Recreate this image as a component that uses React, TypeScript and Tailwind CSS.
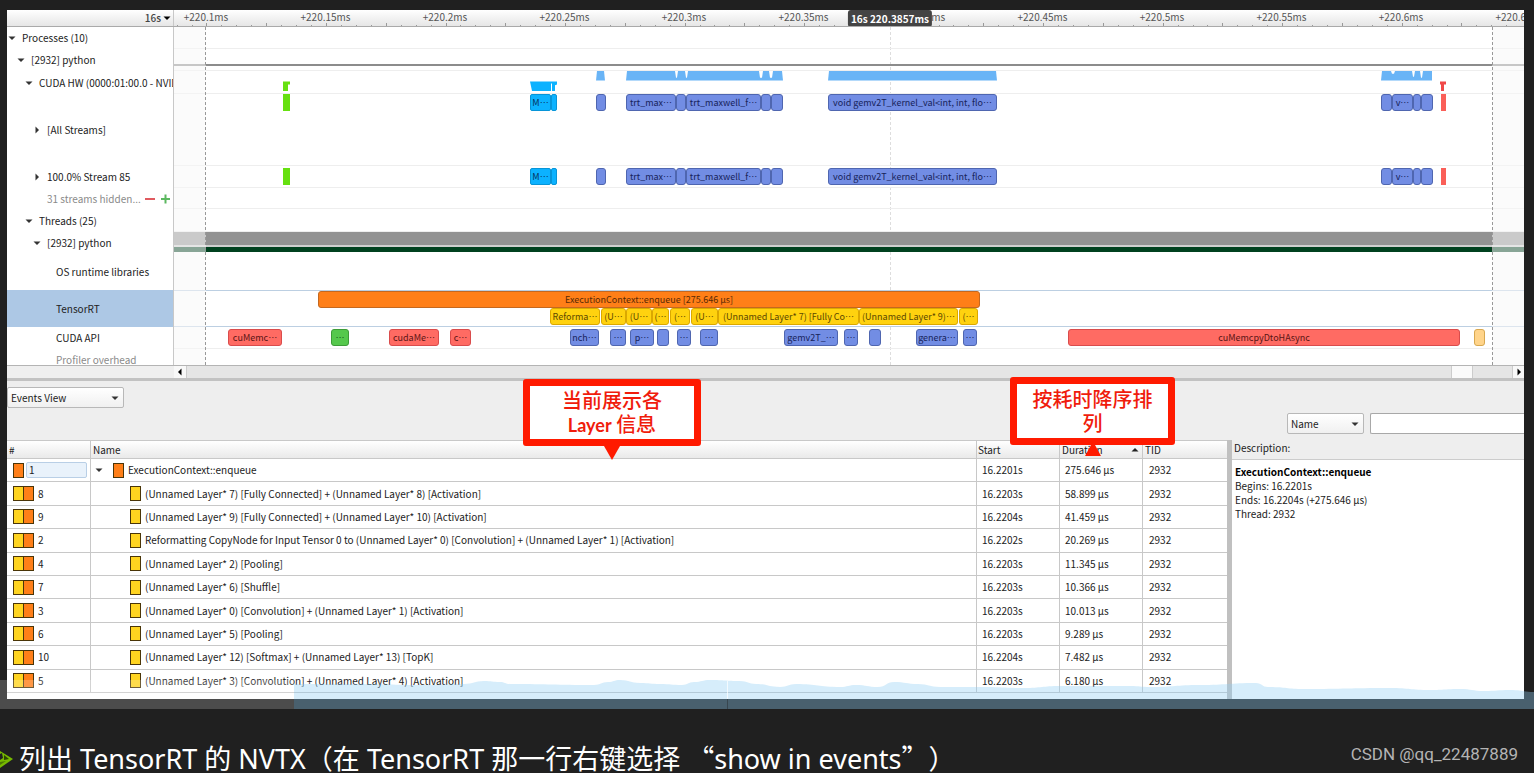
import { clsx } from 'clsx'

type Tone = 'green' | 'cyan' | 'blue' | 'red' | 'orange' | 'yellow' | 'lime' | 'sand'

interface Bar {
  x: number
  w: number
  tone: Tone
  text?: string
}

interface TreeRow {
  label?: string
  depth: number
  arrow?: 'down' | 'right'
  height: string
  kind?: 'process' | 'chart' | 'kernels' | 'stream' | 'hidden' | 'thread' | 'tensorrt' | 'api' | 'overhead'
}

// Width of the visible time range, in timeline units
const RANGE = 1350
const pct = (value: number) => `${(value / RANGE) * 100}%`

const tones: Record<Tone, string> = {
  green: 'bg-[#66e010]',
  cyan: 'bg-[#0cb2ff] border border-[#0795d8] rounded-xs text-[#06325c]',
  blue: 'bg-[#728de4] border border-[#4f66b0] rounded-[3px] text-[#17235a]',
  red: 'bg-[#ff6b63] border border-[#d94c4c] rounded-[3px] text-[#5a1414]',
  orange: 'bg-[#ff7f18] border border-[#c4681f] rounded-[3px] text-[#5a2a05]',
  yellow: 'bg-[#ffd20f] border border-[#dba800] rounded-[3px] text-[#5c4700]',
  lime: 'bg-[#55c84c] border border-[#3d9c38] rounded-[3px] text-[#14501a]',
  sand: 'bg-[#ffd48a] border border-[#d8a850] rounded-[3px]',
}

const kernels: Bar[] = [
  { x: 109, w: 7, tone: 'green' },
  { x: 356, w: 21, tone: 'cyan', text: 'M⋯' },
  { x: 377, w: 6, tone: 'cyan' },
  { x: 422, w: 10, tone: 'blue' },
  { x: 452, w: 50, tone: 'blue', text: 'trt_max⋯' },
  { x: 502, w: 10, tone: 'blue' },
  { x: 512, w: 75, tone: 'blue', text: 'trt_maxwell_f⋯' },
  { x: 587, w: 10, tone: 'blue' },
  { x: 597, w: 12, tone: 'blue' },
  { x: 654, w: 169, tone: 'blue', text: 'void gemv2T_kernel_val<int, int, flo⋯' },
  { x: 1207, w: 11, tone: 'blue' },
  { x: 1218, w: 21, tone: 'blue', text: 'v⋯' },
  { x: 1239, w: 8, tone: 'blue' },
  { x: 1247, w: 12, tone: 'blue' },
]

const layers: Bar[] = [
  { x: 376, w: 50, tone: 'yellow', text: 'Reforma⋯' },
  { x: 427, w: 25, tone: 'yellow', text: '(U⋯' },
  { x: 452, w: 26, tone: 'yellow', text: '(U⋯' },
  { x: 478, w: 17, tone: 'yellow', text: '(⋯' },
  { x: 496, w: 20, tone: 'yellow', text: '(⋯' },
  { x: 517, w: 27, tone: 'yellow', text: '(U⋯' },
  { x: 544, w: 141, tone: 'yellow', text: '(Unnamed Layer* 7) [Fully Co⋯' },
  { x: 685, w: 99, tone: 'yellow', text: '(Unnamed Layer* 9)⋯' },
  { x: 785, w: 19, tone: 'yellow', text: '(⋯' },
]

const apiCalls: Bar[] = [
  { x: 54, w: 54, tone: 'red', text: 'cuMemc⋯' },
  { x: 157, w: 18, tone: 'lime', text: '⋯' },
  { x: 215, w: 50, tone: 'red', text: 'cudaMe⋯' },
  { x: 276, w: 21, tone: 'red', text: 'c⋯' },
  { x: 396, w: 29, tone: 'blue', text: 'nch⋯' },
  { x: 436, w: 16, tone: 'blue', text: '⋯' },
  { x: 456, w: 24, tone: 'blue', text: 'p⋯' },
  { x: 483, w: 12, tone: 'blue' },
  { x: 503, w: 14, tone: 'blue', text: '⋯' },
  { x: 526, w: 18, tone: 'blue', text: '⋯' },
  { x: 610, w: 54, tone: 'blue', text: 'gemv2T_⋯' },
  { x: 670, w: 14, tone: 'blue', text: '⋯' },
  { x: 695, w: 12, tone: 'blue' },
  { x: 742, w: 42, tone: 'blue', text: 'genera⋯' },
  { x: 789, w: 14, tone: 'blue', text: '⋯' },
  { x: 894, w: 392, tone: 'red', text: 'cuMemcpyDtoHAsync' },
  { x: 1300, w: 11, tone: 'sand' },
]

const tree: TreeRow[] = [
  { label: 'Processes (10)', depth: 0, arrow: 'down', height: 'h-[22px]' },
  { label: '[2932] python', depth: 1, arrow: 'down', height: 'h-[22px]', kind: 'process' },
  { label: 'CUDA HW (0000:01:00.0 - NVIDIA', depth: 2, arrow: 'down', height: 'h-[23px]', kind: 'chart' },
  { label: '[All Streams]', depth: 3, arrow: 'right', height: 'h-[72px]', kind: 'kernels' },
  { label: '100.0% Stream 85', depth: 3, arrow: 'right', height: 'h-[22px]', kind: 'stream' },
  { label: '31 streams hidden...', depth: 3, height: 'h-[21px]', kind: 'hidden' },
  { label: 'Threads (25)', depth: 2, arrow: 'down', height: 'h-[23px]' },
  { label: '[2932] python', depth: 3, arrow: 'down', height: 'h-[21px]', kind: 'thread' },
  { label: 'OS runtime libraries', depth: 4, height: 'h-[37px]' },
  { label: 'TensorRT', depth: 4, height: 'h-[37px]', kind: 'tensorrt' },
  { label: 'CUDA API', depth: 4, height: 'h-[22px]', kind: 'api' },
  { label: 'Profiler overhead', depth: 4, height: 'h-[22px]', kind: 'overhead' },
]

const indents = ['pl-px', 'pl-[10px]', 'pl-[18px]', 'pl-[26px]', 'pl-[35px]']

const rulerLabels = [
  '+220.1ms', '+220.15ms', '+220.2ms', '+220.25ms', '+220.3ms', '+220.35ms',
  '+220.4ms', '+220.45ms', '+220.5ms', '+220.55ms', '+220.6ms', '+220.65ms',
]

const events = [
  { id: 1, name: 'ExecutionContext::enqueue', start: '16.2201s', duration: '275.646 µs' },
  { id: 8, name: '(Unnamed Layer* 7) [Fully Connected] + (Unnamed Layer* 8) [Activation]', start: '16.2203s', duration: '58.899 µs' },
  { id: 9, name: '(Unnamed Layer* 9) [Fully Connected] + (Unnamed Layer* 10) [Activation]', start: '16.2204s', duration: '41.459 µs' },
  { id: 2, name: 'Reformatting CopyNode for Input Tensor 0 to (Unnamed Layer* 0) [Convolution] + (Unnamed Layer* 1) [Activation]', start: '16.2202s', duration: '20.269 µs' },
  { id: 4, name: '(Unnamed Layer* 2) [Pooling]', start: '16.2203s', duration: '11.345 µs' },
  { id: 7, name: '(Unnamed Layer* 6) [Shuffle]', start: '16.2203s', duration: '10.366 µs' },
  { id: 3, name: '(Unnamed Layer* 0) [Convolution] + (Unnamed Layer* 1) [Activation]', start: '16.2203s', duration: '10.013 µs' },
  { id: 6, name: '(Unnamed Layer* 5) [Pooling]', start: '16.2203s', duration: '9.289 µs' },
  { id: 10, name: '(Unnamed Layer* 12) [Softmax] + (Unnamed Layer* 13) [TopK]', start: '16.2204s', duration: '7.482 µs' },
  { id: 5, name: '(Unnamed Layer* 3) [Convolution] + (Unnamed Layer* 4) [Activation]', start: '16.2203s', duration: '6.180 µs' },
]

// Heat of the progress strip, as [x, y] pairs
const wave = [
  [0, 4], [60, 4], [130, 5], [170, 4], [190, 1], [206, 2], [216, 4], [300, 5], [314, 2], [326, 0], [346, 3],
  [366, 4], [388, 5], [400, 2], [416, 0], [446, 1], [462, 4], [486, 7], [502, 4], [546, 7], [562, 5], [584, 7],
  [600, 2], [624, 4], [646, 7], [690, 7], [730, 8], [766, 6], [836, 6], [856, 7], [906, 5], [962, 3], [974, 7],
  [1010, 9], [1096, 8], [1136, 10], [1166, 9], [1190, 11], [1216, 10], [1240, 12],
]

function Arrow({ dir, className }: { dir: 'down' | 'right' | 'left' | 'up'; className?: string }) {
  const paths = {
    down: 'M0.5 2.5h7L4 6z',
    right: 'M2.5 0.5v7L6 4z',
    left: 'M5.5 0.5v7L2 4z',
    up: 'M0.5 5.5h7L4 2z',
  }
  return (
    <svg viewBox="0 0 8 8" className={clsx('h-2 w-2 shrink-0', className)} fill="currentColor">
      <path d={paths[dir]} />
    </svg>
  )
}

function Bars({ items, className }: { items: Bar[]; className: string }) {
  return (
    <>
      {items.map((bar) => (
        <div
          key={bar.x}
          className={clsx('absolute flex h-[17px] items-center justify-center overflow-hidden text-[9px] leading-4 whitespace-nowrap', tones[bar.tone], className)}
          style={{ left: pct(bar.x), width: pct(bar.w) }}
        >
          <span>{bar.text?.replace('⋯', '')}</span>
          {bar.text?.endsWith('⋯') && <span>⋯</span>}
        </div>
      ))}
    </>
  )
}

function UsageChart() {
  return (
    <svg viewBox="0 0 1350 23" preserveAspectRatio="none" className="absolute inset-0 h-full w-full">
      <g fill="#69b4f6">
        <path d="M423 0h7l1 10h-9z" />
        <path d="M453 0h48l1 7h1l1-7h7l1 7h1l1-7h71l1 7h2l1-7h6l1 7h2l1-7h9l1 10H452z" />
        <path d="M655 0h167l1 10H654z" />
        <path d="M1208 0h9l1 3h2l1-3h17l1 6h1l1-6h5l1 7h1l1-7h9v10h-51z" />
      </g>
      <path d="M356 11h27v3l-2 1v6h-3v-8h-1v8h-19z" fill="#0cb2ff" />
      <path d="M109 11h7v3h-2v7h-5z" fill="#66e010" />
      <path d="M1266 11h6v3h-2v7h-3v-7h-1z" fill="#f04848" />
    </svg>
  )
}

function Track({ kind }: { kind?: TreeRow['kind'] }) {
  if (kind === 'process') {
    return <div className="absolute inset-x-0 bottom-1 h-[2px] bg-[#8c8c8c]" />
  }
  if (kind === 'chart') return <UsageChart />
  if (kind === 'kernels' || kind === 'stream') {
    const top = kind === 'kernels' ? 'top-0' : 'top-[2px]'
    return (
      <>
        <Bars items={kernels} className={top} />
        <div className={clsx('absolute h-[17px] bg-[#fa5f58]', top)} style={{ left: pct(1267), width: pct(5) }} />
      </>
    )
  }
  if (kind === 'thread') {
    return (
      <div className="flex flex-col">
        <div className="h-[13px] bg-[#929292]" />
        <div className="h-[2px] bg-[#cfcfcf]" />
        <div className="h-[5px] bg-[#00411f]" />
      </div>
    )
  }
  if (kind === 'tensorrt') {
    return (
      <>
        <Bars items={[{ x: 144, w: 662, tone: 'orange', text: 'ExecutionContext::enqueue [275.646 µs]' }]} className="top-0" />
        <Bars items={layers} className="top-[17px]" />
      </>
    )
  }
  if (kind === 'api') return <Bars items={apiCalls} className="top-[2px]" />
  return null
}

function Ruler() {
  return (
    <div className="flex h-[17px] border-b border-[#aaa] bg-linear-to-b from-white to-[#e6e6e6]">
      <button className="flex w-[167px] shrink-0 items-center justify-end gap-[2px] border-r border-[#c8c8c8] pr-[2px] text-[10px] leading-4 font-medium text-[#444]">
        16s
        <Arrow dir="down" className="text-black" />
      </button>
      <div className="relative flex-1 overflow-hidden text-[10px] leading-3 text-[#555]">
        {rulerLabels.map((label, i) => (
          <span key={label} className="absolute top-px -translate-x-1/2" style={{ left: pct(32 + i * 119.5) }}>
            {label}
          </span>
        ))}
        {Array.from({ length: 90 }, (_, i) => (
          <span
            key={i}
            className={clsx('absolute bottom-0 w-px bg-[#999]', (i + 2) % 4 === 0 ? 'h-[3px]' : 'h-px')}
            style={{ left: pct(2.6 + i * 14.94) }}
          />
        ))}
        <span
          className="absolute top-0 flex h-[17px] -translate-x-1/2 items-center rounded-[3px] bg-[#444] px-[3px] text-[10px] font-bold whitespace-nowrap text-white"
          style={{ left: pct(716) }}
        >
          16s 220.3857ms
        </span>
      </div>
    </div>
  )
}

function Timeline() {
  return (
    <div className="relative h-[338px] overflow-hidden bg-white">
      <div className="absolute inset-y-0 right-0 left-[167px]">
        <div className="absolute inset-y-0 border-l border-dashed border-[#ddd]" style={{ left: pct(716) }} />
      </div>
      {tree.map((row, i) => (
        <div key={i} className={clsx('flex', row.height)}>
          <div
            className={clsx(
              'flex w-[167px] shrink-0 items-center overflow-hidden border-r border-[#c8c8c8] whitespace-nowrap',
              indents[row.depth],
              row.kind === 'tensorrt' && 'bg-[#adc8e5]',
              (row.kind === 'hidden' || row.kind === 'overhead') && 'text-[#8a8a8a]',
            )}
          >
            <span className="mr-[6px] w-2 shrink-0 text-[#333]">{row.arrow && <Arrow dir={row.arrow} />}</span>
            <span>{row.label}</span>
            {row.kind === 'hidden' && (
              <svg viewBox="0 0 26 10" className="ml-1 h-[10px] w-[26px] shrink-0" fill="none" strokeWidth="2">
                <path d="M0 5h10" stroke="#e05a60" />
                <path d="M16 5h9M20.500 0.500v9" stroke="#5cb860" />
              </svg>
            )}
          </div>
          <div
            className={clsx(
              'relative flex-1',
              row.kind === 'tensorrt' && 'border-y border-[#bccfe2]',
              !['tensorrt', 'thread', 'overhead'].includes(row.kind ?? '') && row.label !== 'OS runtime libraries' && 'border-b border-[#eee]',
            )}
          >
            <Track kind={row.kind} />
          </div>
        </div>
      ))}
      {/* area outside of the captured range */}
      <div className="pointer-events-none absolute inset-y-0 right-0 left-[167px] flex justify-between">
        <div className="border-r border-dashed border-[#999] bg-[#f8f8f8]/55" style={{ width: pct(32) }} />
        <div className="border-l border-dashed border-[#999] bg-[#f8f8f8]/55" style={{ width: pct(32) }} />
      </div>
    </div>
  )
}

function ScrollBar() {
  return (
    <div className="flex h-[13px] border-t border-[#b4b4b4] bg-[#efefef]">
      <div className="w-[167px] shrink-0" />
      <button className="flex w-3 items-center justify-center bg-[#f8f8f8]" aria-label="Scroll left">
        <Arrow dir="left" className="text-black" />
      </button>
      <div className="relative flex-1 border-x border-[#ccc] bg-[#e5e5e5]">
        <div className="absolute inset-y-0 right-[39px] w-[22px] border-x border-[#ccc] bg-[#fafafa]" />
      </div>
      <button className="flex w-[11px] items-center justify-center bg-[#f8f8f8]" aria-label="Scroll right">
        <Arrow dir="right" className="text-black" />
      </button>
    </div>
  )
}

function Dropdown({ label, value, className }: { label: string; value: string; className: string }) {
  return (
    <div className={clsx('relative', className)}>
      <select
        aria-label={label}
        className="h-[21px] w-full appearance-none rounded-xs border border-[#b8b8b8] bg-linear-to-b from-white to-[#f0f0f0] pl-[3px] text-[10px] leading-4"
      >
        <option>{value}</option>
      </select>
      <Arrow dir="down" className="pointer-events-none absolute top-[7px] right-[5px] text-[#333]" />
    </div>
  )
}

function Swatch({ color }: { color: 'orange' | 'yellow' }) {
  return (
    <span
      className={clsx(
        'inline-block h-[15px] w-[11px] shrink-0 border border-[#4a3508]',
        color === 'orange' ? 'bg-[#ff7f18]' : 'bg-[#ffd420]',
      )}
    />
  )
}

function EventsTable() {
  const cell = 'border-r border-b border-[#c8c8c8] p-0'
  const head = 'border-r border-b border-[#c8c8c8] p-0 text-left font-normal'
  return (
    <table className="h-[252px] w-full table-fixed border-separate border-spacing-0 text-[10px] leading-4">
      <thead>
        <tr className="h-[18px] bg-linear-to-b from-white to-[#e8e8e8]">
          <th className={clsx(head, 'w-[84px] pl-[2px]')}>#</th>
          <th className={clsx(head, 'pl-[2px]')}>Name</th>
          <th className={clsx(head, 'w-[83px] pl-px')}>Start</th>
          <th className={clsx(head, 'w-[83px]')}>
            <div className="flex items-center justify-between pr-[3px] pl-[2px]">
              Duration
              <Arrow dir="up" className="text-[#222]" />
            </div>
          </th>
          <th className="w-[84px] border-b border-[#c8c8c8] p-0 pl-[2px] text-left font-normal">TID</th>
        </tr>
      </thead>
      <tbody>
        {events.map((event, i) => (
          <tr key={event.id}>
            <td className={cell}>
              {i === 0 ? (
                <div className="flex items-center gap-[2px] pr-[3px] pl-[6px]">
                  <Swatch color="orange" />
                  <span className="flex h-4 flex-1 items-center rounded-xs border border-[#b9cfe6] bg-[#e9f2fb] pl-[2px]">{event.id}</span>
                </div>
              ) : (
                <div className="flex items-center pl-[6px]">
                  <Swatch color="yellow" />
                  <span className="-ml-px flex"><Swatch color="orange" /></span>
                  <span className="pl-1">{event.id}</span>
                </div>
              )}
            </td>
            <td className={cell}>
              {i === 0 ? (
                <div className="flex items-center gap-1 pl-1">
                  <Arrow dir="down" className="mr-[6px] text-[#333]" />
                  <Swatch color="orange" />
                  <span>{event.name}</span>
                </div>
              ) : (
                <div className="flex items-center gap-1 pl-[39px]">
                  <Swatch color="yellow" />
                  <span className="truncate">{event.name}</span>
                </div>
              )}
            </td>
            <td className={clsx(cell, 'pl-[5px]')}>{event.start}</td>
            <td className={clsx(cell, 'pl-[5px]')}>{event.duration}</td>
            <td className="border-b border-[#c8c8c8] p-0 pl-[6px]">2932</td>
          </tr>
        ))}
      </tbody>
    </table>
  )
}

function ProgressStrip() {
  const line = wave
    .slice(1)
    .map(([x, y], i) => {
      const [px, py] = wave[i]
      const mid = (px + x) / 2
      return `C${mid} ${py} ${mid} ${y} ${x} ${y}`
    })
    .join('')
  return (
    <div className="pointer-events-none absolute inset-x-0 bottom-0 flex h-[29px]">
      <div className="w-[294px] shrink-0 bg-white/20" />
      <svg viewBox="0 0 1240 29" preserveAspectRatio="none" className="h-full min-w-0 flex-1">
        <path d={`M0 29V4${line}V29z`} fill="#90cef4" fillOpacity="0.37" />
        <path d="M433.500 1v18" stroke="#fff" strokeOpacity="0.7" />
        <path d="M433.500 19v10" stroke="#202020" strokeOpacity="0.4" />
      </svg>
    </div>
  )
}

const calloutBox =
  'flex flex-col items-center justify-center rounded-[3px] border-[7px] border-[#ff1a00] bg-white text-center text-xl leading-6 font-medium text-[#f01c0c]'

export default function App() {
  return (
    <div className="min-h-screen overflow-hidden bg-[#202020] font-['Noto_Sans_CJK_SC',sans-serif] text-[10px] leading-4 text-[#222]">
      <div className="relative pt-[10px] pr-[10px] pb-[10px] pl-[7px]">
        <main className="bg-[#eeeeee]">
          <Ruler />
          <Timeline />
          <ScrollBar />
          <div className="h-[3px] bg-[#c2c2c2]" />

          <section className="relative">
            <div className="flex h-[59px] items-start justify-between">
              <Dropdown label="View" value="Events View" className="mt-[6px] w-[117px]" />
              <div className="flex items-center gap-[6px] self-end pb-[6px]">
                <Dropdown label="Search in" value="Name" className="w-[77px]" />
                <input
                  type="text"
                  aria-label="Search"
                  className="h-[21px] w-[154px] rounded-l-xs border border-r-0 border-[#a8a8a8] bg-white px-1"
                />
              </div>
            </div>

            <div className="flex h-[259px]">
              <div className="min-w-0 flex-1 border-t border-[#c8c8c8] bg-white">
                <EventsTable />
              </div>
              <div className="w-[5px] shrink-0 bg-[#c0c0c0]" />
              <aside className="flex w-[292px] shrink-0 flex-col">
                <h2 className="h-5 border-b border-[#ccc] pl-[2px]">Description:</h2>
                <div className="flex-1 bg-white pt-[5px] pl-[3px] leading-[14px] text-[#222]">
                  <p className="font-bold text-black">ExecutionContext::enqueue</p>
                  <p>Begins: 16.2201s</p>
                  <p>Ends: 16.2204s (+275.646 µs)</p>
                  <p>Thread: 2932</p>
                </div>
              </aside>
            </div>

            <div className="absolute -top-[2px] left-[516px] flex flex-col items-center">
              <div className={clsx(calloutBox, 'h-[67px] w-[178px]')}>
                <span>当前展示各</span>
                <span>
                  <b className="font-['Lato',sans-serif] text-lg leading-6">Layer</b> 信息
                </span>
              </div>
              <svg viewBox="0 0 16 14" className="h-[14px] w-4" fill="#ff1a00">
                <path d="M0 0h16L8 14z" />
              </svg>
            </div>
            <div className="absolute -top-1 right-[349px] flex flex-col items-center">
              <div className={clsx(calloutBox, 'h-[68px] w-[165px]')}>
                <span>按耗时降序排</span>
                <span>列</span>
              </div>
              <svg viewBox="0 0 16 11" className="h-[11px] w-4" fill="#ff1a00">
                <path d="M6 0h4l6 11H0z" />
              </svg>
            </div>
          </section>
        </main>
        <ProgressStrip />
      </div>

      <footer className="flex h-16 items-end justify-between overflow-hidden pr-4 text-white">
        <div className="flex items-center gap-[6px]">
          <svg viewBox="0 0 13 18" className="h-[18px] w-[13px]">
            <path d="M0 1L13 9L0 18z" fill="#76b900" />
            <path d="M0 4l2-1 1 5-3 2z" fill="#202020" />
            <path d="M4 5l5 4-5 1z" fill="#2c4400" />
            <path d="M0 12l6-1-6 4z" fill="#4c7a00" />
          </svg>
          <p className="text-[27px] leading-7 whitespace-nowrap font-['Noto_Sans','Noto_Sans_CJK_SC',sans-serif] [text-spacing-trim:space-all]">
            列出 TensorRT 的 NVTX（在 TensorRT 那一行右键选择 <span className="font-['Noto_Sans_CJK_SC',sans-serif]">“</span>show in events
            <span className="font-['Noto_Sans_CJK_SC',sans-serif]">”</span>）
          </p>
        </div>
        <p className="pb-[9px] font-['Roboto',sans-serif] text-[17px] leading-5 text-[#b4b4b4]">CSDN @qq_22487889</p>
      </footer>
    </div>
  )
}
